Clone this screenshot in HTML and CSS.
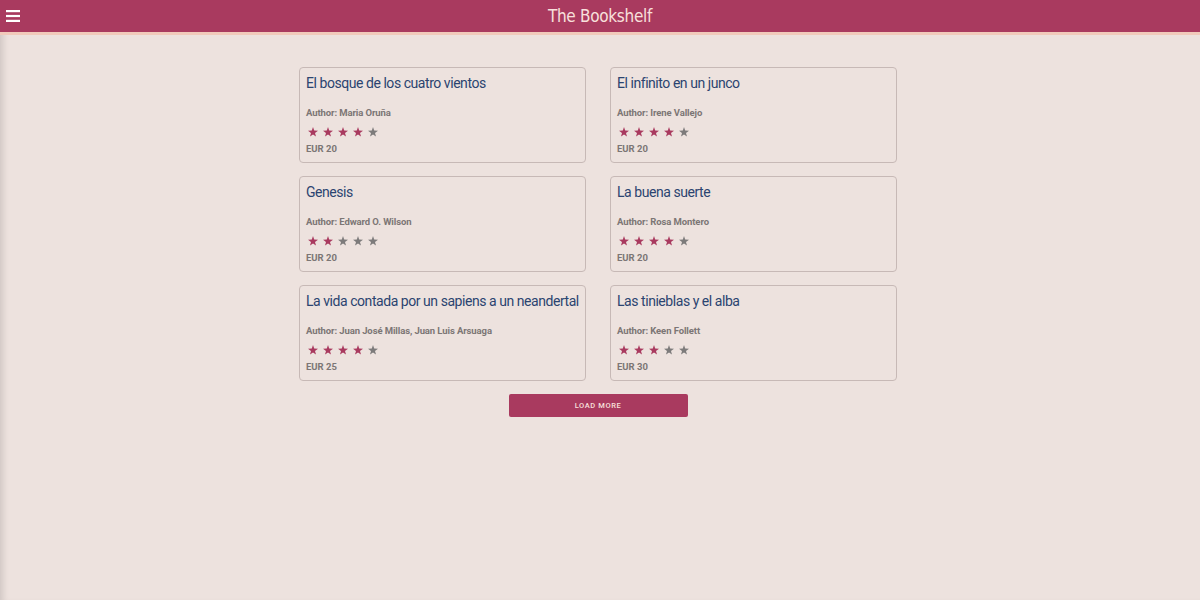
FILE: index.html
```html
<!DOCTYPE html>
<html lang="en">
<head>
<meta charset="utf-8">
<title>The Bookshelf</title>
<link rel="stylesheet" href="styles.css">
</head>
<body>
<header class="topbar">
  <button class="menu-btn" aria-label="Menu">
    <svg width="14" height="12" viewBox="0 0 14 12"><rect x="0" y="0" width="14" height="2.2" fill="#fff"/><rect x="0" y="4.9" width="14" height="2.2" fill="#fff"/><rect x="0" y="9.8" width="14" height="2.2" fill="#fff"/></svg>
  </button>
  <h1 class="brand">The Bookshelf</h1>
</header>
<div class="stripe"></div>
<main class="content">
  <section class="grid">
    <article class="card">
      <h2 class="title">El bosque de los cuatro vientos</h2>
      <p class="author">Author: Maria Oruña</p>
      <div class="stars"><i class="star on"></i><i class="star on"></i><i class="star on"></i><i class="star on"></i><i class="star"></i></div>
      <p class="price">EUR 20</p>
    </article>
    <article class="card">
      <h2 class="title">El infinito en un junco</h2>
      <p class="author">Author: Irene Vallejo</p>
      <div class="stars"><i class="star on"></i><i class="star on"></i><i class="star on"></i><i class="star on"></i><i class="star"></i></div>
      <p class="price">EUR 20</p>
    </article>
    <article class="card">
      <h2 class="title">Genesis</h2>
      <p class="author">Author: Edward O. Wilson</p>
      <div class="stars"><i class="star on"></i><i class="star on"></i><i class="star"></i><i class="star"></i><i class="star"></i></div>
      <p class="price">EUR 20</p>
    </article>
    <article class="card">
      <h2 class="title">La buena suerte</h2>
      <p class="author">Author: Rosa Montero</p>
      <div class="stars"><i class="star on"></i><i class="star on"></i><i class="star on"></i><i class="star on"></i><i class="star"></i></div>
      <p class="price">EUR 20</p>
    </article>
    <article class="card">
      <h2 class="title">La vida contada por un sapiens a un neandertal</h2>
      <p class="author">Author: Juan José Millas, Juan Luis Arsuaga</p>
      <div class="stars"><i class="star on"></i><i class="star on"></i><i class="star on"></i><i class="star on"></i><i class="star"></i></div>
      <p class="price">EUR 25</p>
    </article>
    <article class="card">
      <h2 class="title">Las tinieblas y el alba</h2>
      <p class="author">Author: Keen Follett</p>
      <div class="stars"><i class="star on"></i><i class="star on"></i><i class="star on"></i><i class="star"></i><i class="star"></i></div>
      <p class="price">EUR 30</p>
    </article>
  </section>
  <button class="load-more">LOAD MORE</button>
</main>
</body>
</html>
```
FILE: styles.css
```css
* { box-sizing: border-box; }
html, body { height: 100%; }
body {
  margin: 0;
  background: #ede2de;
  font-family: Roboto, "Liberation Sans", sans-serif;
  box-shadow: inset 7px 0 6px -4px rgba(0,0,0,0.12);
  min-height: 600px;
}
.topbar {
  height: 32px;
  background: #a93a5f;
  display: flex;
  align-items: center;
}
.menu-btn {
  background: none;
  border: 0;
  padding: 0;
  margin-left: 6px;
  width: 14px;
  height: 12px;
  display: flex;
  cursor: pointer;
}
.brand {
  flex: 1;
  margin: 0 0 0 -20px;
  text-align: center;
  font-family: "DejaVu Sans Condensed", "DejaVu Sans", sans-serif;
  font-weight: normal;
  font-size: 17px;
  color: #f8e0dc;
  letter-spacing: -0.3px;
}
.stripe {
  height: 3px;
  background: #f1cabb;
}
.content {
  display: flex;
  flex-direction: column;
  align-items: center;
  padding: 32px 4px 0 0;
}
.grid {
  display: grid;
  grid-template-columns: 287px 287px;
  column-gap: 24px;
  row-gap: 13px;
}
.card {
  border: 1px solid #c7b9b6;
  border-radius: 4px;
  padding: 5px 6px 7px;
  height: 96px;
}
.title {
  margin: 0;
  font-size: 14px;
  line-height: 20px;
  font-weight: 400;
  color: #2b4470;
  white-space: nowrap;
  letter-spacing: -0.45px;
}
.author {
  margin: 13px 0 0;
  font-size: 9.5px;
  line-height: 14px;
  font-weight: 700;
  color: #7c7675;
  letter-spacing: -0.1px;
}
.stars {
  margin-top: 7px;
  height: 10px;
  display: flex;
  gap: 5px;
  padding-left: 2px;
}
.star {
  display: block;
  width: 10px;
  height: 10px;
  background: #7d7b7b;
  clip-path: polygon(50% 0%, 62% 36%, 100% 37%, 70% 59%, 80% 95%, 50% 74%, 20% 95%, 30% 59%, 0% 37%, 38% 36%);
}
.star.on { background: #a93a5f; }
.price {
  margin: 5px 0 0;
  font-size: 9.5px;
  line-height: 14px;
  font-weight: 700;
  color: #7c7675;
}
.load-more {
  margin-top: 13px;
  width: 179px;
  height: 23px;
  border: 0;
  border-radius: 2px;
  background: #a93a5f;
  color: #f8e0dc;
  font-family: Roboto, "Liberation Sans", sans-serif;
  font-size: 7.5px;
  font-weight: 500;
  letter-spacing: 0.6px;
}
```
